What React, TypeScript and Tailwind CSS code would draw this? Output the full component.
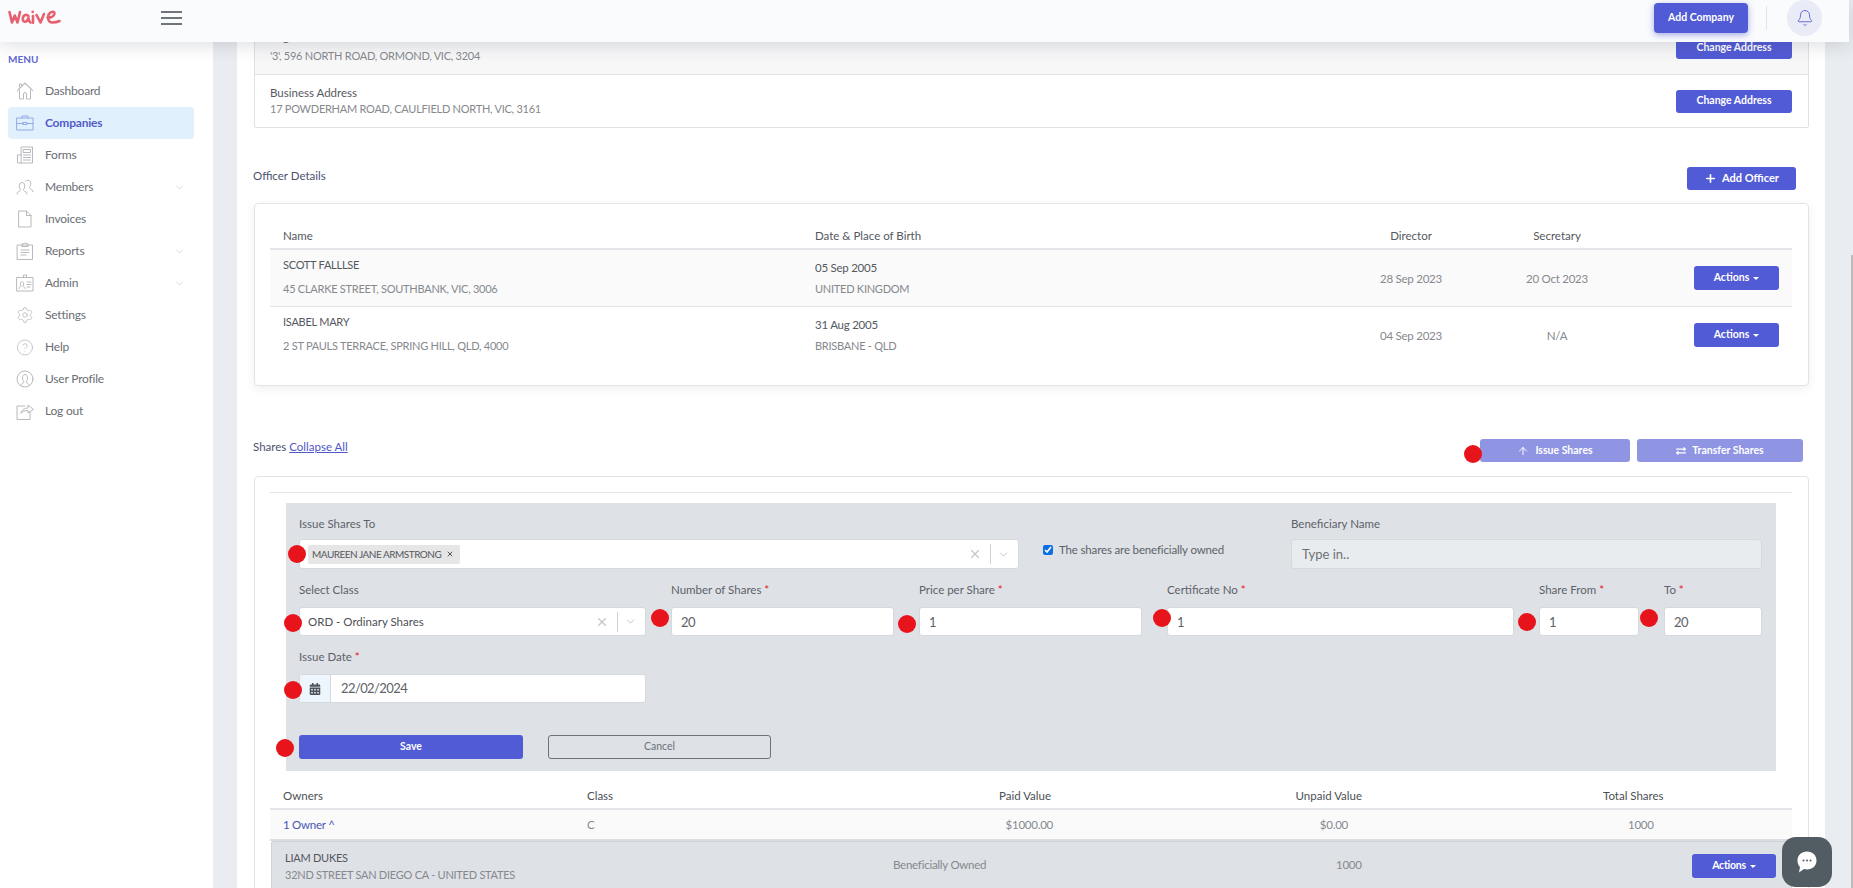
import React from 'react';
import { Plus, ArrowUp, Bell, Settings, CircleHelp, ChevronDown, X } from 'lucide-react';
import { FaCalendarAlt, FaExchangeAlt } from 'react-icons/fa';

const s = { fill: 'none', stroke: 'currentColor', strokeWidth: 0.9, strokeLinecap: 'round', strokeLinejoin: 'round' } as const;

const Ic = ({ children }: { children: React.ReactNode }) => (
  <svg width="18" height="18" viewBox="0 0 18 18" {...s}>{children}</svg>
);

const icons: Record<string, React.ReactNode> = {
  Dashboard: <Ic><path d="M1 9 9 1.5 17 9M2 7.5 9 .8l7 6.7M3.500 8v9h4v-5a1.500 1.500 0 0 1 3 0v5h4V8M3.500 5V2h2v1.500" /></Ic>,
  Companies: <Ic><rect x="1" y="4" width="16" height="12" /><path d="M6 4V2h6v2M1 9.500h6M11 9.500h6" /><rect x="7" y="8.500" width="4" height="2" /></Ic>,
  Forms: <Ic><rect x="5.500" y="1" width="11" height="16" /><path d="M5.500 9H1.500v8h4M7.500 3.500h7v3h-7zM7.500 9h7M7.500 11.500h7M7.500 14h7" /></Ic>,
  Members: <Ic><path d="M.8 16c0-2.500 3-2.500 3.700-3.800.4-.8-.9-1.500-1.100-3C3.100 7 3.500 4.500 6 4.500s3 2.500 2.600 4.700c-.2 1.500-1.500 2.200-1.100 3 .7 1.300 3.700 1.300 3.700 3.800M9.500 3.200C10 2.500 11 2.200 12 2.200c2.500 0 3 2.500 2.600 4.700-.2 1.500-1.500 2.200-1.100 3 .7 1.300 3.700 1.500 3.700 3.800" /></Ic>,
  Invoices: <Ic><path d="M3 1h7.500L15 5.500V17H3zM10.500 1v4.500H15" /></Ic>,
  Reports: <Ic><rect x="1.500" y="3" width="15" height="14.500" /><path d="M6 3V1.800h2L9 .7l1 1.100h2V4.500H6zM5 8h8M5 10.500h8M5 13h5" /></Ic>,
  Admin: <Ic><rect x="1" y="3.500" width="16" height="13.500" /><path d="M7.500 3.500V1h3v2.500M2.800 14.500c0-1.500 2-1.500 2.300-2.300.2-.5-.8-1-.8-2.200 0-1.300.6-2.200 1.700-2.200S7.700 8.700 7.700 10c0 1.200-1 1.700-.8 2.200.3.800 2.300.8 2.300 2.300M11 8h4M11 10.500h4M11 13h3" /></Ic>,
  Settings: <Settings size={18} strokeWidth={1} />,
  Help: <CircleHelp size={19} strokeWidth={0.9} />,
  'User Profile': <Ic><circle cx="9" cy="9" r="8" /><path d="M4.500 15.500c.3-2 3-2 3.300-3.300.2-.8-1.300-1.500-1.300-4C6.500 6 7.500 4.500 9 4.500S11.500 6 11.500 8.200c0 2.500-1.500 3.200-1.300 4 .3 1.300 3 1.300 3.300 3.300" /></Ic>,
  'Log out': <Ic><path d="M9 4H1v13.500h13V10M5 11c.5-3 3-5 7-5V3l5.500 4.500L12 11V8.500c-3 0-5.500.5-7 2.500z" /></Ic>,
};

const menu: [string, boolean?][] = [
  ['Dashboard'], ['Companies'], ['Forms'], ['Members', true], ['Invoices'], ['Reports', true], ['Admin', true], ['Settings'], ['Help'], ['User Profile'], ['Log out'],
];

const Dot = ({ className }: { className: string }) => (
  <span className={`absolute w-[18px] h-[18px] rounded-full bg-[#e8141c] ${className}`} />
);

const Btn = ({ children, className = '' }: { children: React.ReactNode; className?: string }) => (
  <button className={`flex items-center justify-center rounded-[3px] bg-[#525bd6] text-white text-[10.500px] font-bold ${className}`}>{children}</button>
);

const Actions = ({ className = '' }: { className?: string }) => (
  <Btn className={`h-[24px] gap-[4px] ${className}`}>
    Actions
    <span className="w-0 h-0 border-x-[3px] border-x-transparent border-t-[3px] border-t-white" />
  </Btn>
);

const Label = ({ children, req }: { children: React.ReactNode; req?: boolean }) => (
  <div className="h-[16px] leading-[16px] text-[11.500px] text-[#5d6168]">
    {children}
    {req && <span className="text-[#e8141c]"> *</span>}
  </div>
);

const Field = ({ label, value, dot }: { label: string; value: string; dot: string }) => (
  <div>
    <Label req>{label}</Label>
    <div className="relative mt-[9px]">
      <Dot className={dot} />
      <input readOnly value={value} className="block w-full h-[29px] rounded-[3px] bg-white border border-[#d5d8dc] px-[9px] text-[13px] tracking-[-0.5px] text-[#5d6168] outline-none" />
    </div>
  </div>
);

const Officer = ({ name, addr, date, place, dir, sec, shaded }: { name: string; addr: string; date: string; place: string; dir: string; sec: string; shaded?: boolean }) => (
  <div className={`grid grid-cols-[545px_523px_146px_146px_162px] h-[57px] border-b border-[#e3e5e8] last:border-b-transparent ${shaded ? 'bg-[#fafafa]' : ''}`}>
    <div className="pl-[13px] pt-[7px]">
      <div className="leading-[16px] text-[11px] tracking-[-0.25px] text-[#55585e]">{name}</div>
      <div className="mt-[8px] leading-[16px] text-[11px] tracking-[-0.25px] text-[#85898e]">{addr}</div>
    </div>
    <div className="pt-[10px]">
      <div className="leading-[16px] text-[11.500px] tracking-[-0.25px] text-[#55585e]">{date}</div>
      <div className="mt-[5px] leading-[16px] text-[11px] tracking-[-0.25px] text-[#85898e]">{place}</div>
    </div>
    <div className="flex items-center justify-center text-[11.500px] tracking-[-0.25px] text-[#85898e] pt-[2px]">{dir}</div>
    <div className="flex items-center justify-center text-[11.500px] tracking-[-0.25px] text-[#85898e] pt-[2px]">{sec}</div>
    <div className="flex justify-end pr-[13px] pt-[16px]"><Actions className="w-[85px]" /></div>
  </div>
);

export default function App() {
  return (
    <div className="relative flex flex-col h-[888px] overflow-hidden bg-[#e9ecf0] text-[11.500px] font-['Lato','Open_Sans',sans-serif]">
      <header className="relative z-10 flex items-center w-[1849px] h-[42px] shrink-0 bg-[#fafbfd] shadow-[0_3px_18px_rgba(40,45,60,0.16)]">
        <svg width="53" height="18" viewBox="0 0 53 18" className="ml-[8px] -mt-[8px]" fill="none" stroke="#e7606f" strokeWidth="2.600" strokeLinecap="round" strokeLinejoin="round" role="img" aria-label="waive logo">
          <path d="M1.500 4 4 14.500 6.800 7.500 9.500 14.500 12 4" />
          <path d="M20.500 8C18.500 5.800 14.800 7 14.800 10.800c0 4 3.800 4.300 5.700-.8.2 2.500.8 4 2 4.500" />
          <path d="M25 8V14.800M24.700 3.800v.2" />
          <path d="M28.500 7 32.500 14.500 36 6" />
          <path d="M39.500 9.500c3 .3 6.500-1 7-4 .3-2.500-3.500-2.500-5.500.5-2 3.500-.5 8.500 3 8.500 3 0 5.500-.5 7.500-1.500" />
        </svg>
        <div className="ml-[100px] -mt-[6px] w-[21px] flex flex-col gap-[4.500px]">
          <span className="block h-[1.500px] bg-[#6e7479]" />
          <span className="block h-[1.500px] bg-[#6e7479]" />
          <span className="block h-[1.500px] bg-[#6e7479]" />
        </div>
        <div className="ml-auto flex items-center pr-[27px]">
          <Btn className="w-[94px] h-[30px] rounded-[4px] -mt-[6px] shadow-[0_2px_6px_rgba(82,91,214,0.5)]">Add Company</Btn>
          <span className="ml-[18px] -mt-[6px] w-px h-[24px] bg-[#e2e4ea]" />
          <span className="ml-[20px] -mt-[6px] flex items-center justify-center w-[35px] h-[36px] rounded-full bg-[#e9ebf7] text-[#5a62d0]">
            <Bell size={18} strokeWidth={1.200} />
          </span>
        </div>
      </header>

      <div className="flex flex-1 min-h-0">
        <aside className="w-[213px] shrink-0 bg-white pt-[10px] pl-[8px] pr-[19px]">
          <div className="h-[14px] leading-[14px] text-[10px] font-bold text-[#5f67d3] mb-[9px]">MENU</div>
          {menu.map(([name, chev]) => {
            const active = name === 'Companies';
            return (
              <div key={name} className={`flex items-center h-[32px] rounded-[4px] pl-[8px] pr-[9px] ${active ? 'bg-[#e1f0fd]' : ''}`}>
                <span className={`flex justify-center w-[18px] ${active ? 'text-[#8aa5de]' : 'text-[#b0b2b6]'}`}>{icons[name]}</span>
                <span className={`ml-[11px] text-[12px] tracking-[-0.2px] ${active ? 'font-bold text-[#535cc8]' : 'text-[#6a6e73]'}`}>{name}</span>
                {chev && <ChevronDown size={11} strokeWidth={1} className="ml-auto text-[#a9acb0]" />}
              </div>
            );
          })}
        </aside>

        <main className="ml-[24px] w-[1588px] shrink-0 bg-white pl-[17px] pr-[16px] overflow-hidden">
          <section className="-mt-[22px] border border-[#dfe1e3] rounded-[2px]">
            <div className="flex items-center justify-between h-[54px] bg-[#f7f7f8] border-b border-[#dfe1e3] pl-[15px] pr-[16px]">
              <div>
                <div className="leading-[16px] text-[11.500px] text-[#55585e] -translate-y-[3px]">Registered Address</div>
                <div className="leading-[16px] text-[11px] tracking-[-0.25px] text-[#85898e]">'3', 596 NORTH ROAD, ORMOND, VIC, 3204</div>
              </div>
              <Btn className="w-[116px] h-[23px]">Change Address</Btn>
            </div>
            <div className="flex items-center justify-between h-[52px] pl-[15px] pr-[16px]">
              <div>
                <div className="leading-[16px] text-[11.500px] text-[#55585e]">Business Address</div>
                <div className="leading-[16px] text-[11px] tracking-[-0.25px] text-[#85898e]">17 POWDERHAM ROAD, CAULFIELD NORTH, VIC, 3161</div>
              </div>
              <Btn className="w-[116px] h-[23px]">Change Address</Btn>
            </div>
          </section>

          <div className="flex items-center justify-between h-[23px] mt-[39px] pr-[13px]">
            <span className="text-[11.500px] text-[#4d5170] -translate-y-[3px] -ml-px">Officer Details</span>
            <Btn className="w-[109px] h-[23px] gap-[5px] text-[11px]"><Plus size={13} strokeWidth={3} />Add Officer</Btn>
          </div>

          <section className="mt-[13px] h-[183px] border border-[#e1e3e6] rounded-[4px] shadow-[0_3px_10px_rgba(60,65,80,0.08)] pl-[15px] pr-[16px] pt-[16px]">
            <div className="grid grid-cols-[545px_523px_146px_146px_162px] h-[30px] pt-[7px] border-b-2 border-[#e3e5e8] text-[#55585e]">
              <div className="pl-[13px]">Name</div>
              <div>Date &amp; Place of Birth</div>
              <div className="text-center">Director</div>
              <div className="text-center">Secretary</div>
              <div />
            </div>
            <Officer shaded name="SCOTT FALLLSE" addr="45 CLARKE STREET, SOUTHBANK, VIC, 3006" date="05 Sep 2005" place="UNITED KINGDOM" dir="28 Sep 2023" sec="20 Oct 2023" />
            <Officer name="ISABEL MARY" addr="2 ST PAULS TERRACE, SPRING HILL, QLD, 4000" date="31 Aug 2005" place="BRISBANE - QLD" dir="04 Sep 2023" sec="N/A" />
          </section>

          <div className="flex items-center justify-between h-[23px] mt-[53px] pr-[6px]">
            <span className="text-[11.500px] text-[#4d5170] -translate-y-[4px] -ml-px">Shares <a className="underline text-[#5058c8]">Collapse All</a></span>
            <div className="flex gap-[7px]">
              <div className="relative">
                <Dot className="-left-[16px] top-[6px]" />
                <Btn className="w-[150px] h-[23px] gap-[6px] bg-[#8f95e3]!"><ArrowUp size={12} strokeWidth={2} />Issue Shares</Btn>
              </div>
              <Btn className="w-[166px] h-[23px] gap-[6px] bg-[#8f95e3]!"><FaExchangeAlt size={10} />Transfer Shares</Btn>
            </div>
          </div>

          <section className="mt-[14px] h-[420px] border border-[#e1e3e6] rounded-[4px] pl-[15px] pr-[16px]">
            <div className="h-[16px] border-b border-[#e3e5e8]" />
            <div className="mt-[10px] mx-[16px] h-[268px] bg-[#dee1e6] pt-[13px] pl-[13px] pr-[14px]">
              <div className="flex">
                <div className="w-[720px]">
                  <Label>Issue Shares To</Label>
                  <div className="relative flex items-center h-[30px] mt-[7px] bg-white border border-[#d5d8dc] rounded-[3px] pl-[8px] pr-[8px]">
                    <Dot className="-left-[12px] top-[5px]" />
                    <span className="flex items-center justify-between w-[152px] h-[19px] bg-[#e6e6e6] rounded-[2px] pl-[4px] pr-[6px] text-[10px] tracking-[-0.5px] text-[#55585e]">
                      MAUREEN JANE ARMSTRONG
                      <X size={8} strokeWidth={3} className="text-[#555]" />
                    </span>
                    <X size={14} strokeWidth={2} className="ml-auto mr-[8px] text-[#c4c6c9]" />
                    <span className="w-px h-[20px] bg-[#cfd1d4]" />
                    <ChevronDown size={13} strokeWidth={1.500} className="ml-[6px] text-[#b7b9bc]" />
                  </div>
                </div>
                <label className="ml-[24px] w-[248px] flex items-center gap-[6px] h-[30px] mt-[20px] pb-[2px] text-[11.500px] tracking-[-0.15px] text-[#5d6168]">
                  <input type="checkbox" checked readOnly className="w-[10px] h-[10px] accent-[#0b6fe3]" />
                  The shares are beneficially owned
                </label>
                <div className="w-[471px]">
                  <Label>Beneficiary Name</Label>
                  <input readOnly placeholder="Type in.." className="block w-full h-[30px] mt-[7px] rounded-[3px] bg-[#e9ecef] border border-[#d5d8dc] px-[10px] text-[13px] placeholder:text-[#6c7075] outline-none" />
                </div>
              </div>

              <div className="grid grid-cols-[347px_223px_223px_347px_100px_98px] gap-x-[25px] mt-[13px]">
                <div>
                  <Label>Select Class</Label>
                  <div className="relative flex items-center h-[29px] mt-[9px] bg-white border border-[#d5d8dc] rounded-[3px] pl-[8px] pr-[8px] text-[11.500px] text-[#4c4f55]">
                    <Dot className="-left-[16px] top-[6px]" />
                    ORD - Ordinary Shares
                    <X size={14} strokeWidth={2} className="ml-auto mr-[8px] text-[#c4c6c9]" />
                    <span className="w-px h-[20px] bg-[#cfd1d4]" />
                    <ChevronDown size={13} strokeWidth={1.500} className="ml-[6px] text-[#b7b9bc]" />
                  </div>
                </div>
                <Field label="Number of Shares" value="20" dot="-left-[20px] top-[2px]" />
                <Field label="Price per Share" value="1" dot="-left-[21px] top-[8px]" />
                <Field label="Certificate No" value="1" dot="-left-[14px] top-[2px]" />
                <Field label="Share From" value="1" dot="-left-[21px] top-[6px]" />
                <Field label="To" value="20" dot="-left-[24px] top-[2px]" />
              </div>

              <div className="mt-[13px] w-[347px]">
                <Label req>Issue Date</Label>
                <div className="relative flex h-[29px] mt-[9px] bg-white border border-[#d5d8dc] rounded-[3px]">
                  <Dot className="-left-[16px] top-[6px] z-10" />
                  <span className="flex items-center justify-center w-[31px] bg-[#eef6fd] border-r border-[#d5d8dc] text-[#4e5358] rounded-l-[3px]"><FaCalendarAlt size={12} /></span>
                  <input readOnly value="22/02/2024" className="flex-1 min-w-0 pl-[10px] text-[13px] tracking-[-0.6px] text-[#5d6168] outline-none" />
                </div>
              </div>

              <div className="flex gap-[25px] mt-[32px]">
                <div className="relative">
                  <Dot className="-left-[23px] top-[4px]" />
                  <Btn className="w-[224px] h-[24px]">Save</Btn>
                </div>
                <button className="w-[223px] h-[24px] border border-[#6d7378] rounded-[3px] text-[10.500px] text-[#6d7378]">Cancel</button>
              </div>
            </div>

            <div className="grid grid-cols-[317px_213px_253px_309px_430px] h-[39px] pt-[16px] border-b-2 border-[#e3e5e8] text-[#4c4f55]">
              <div className="pl-[13px]">Owners</div>
              <div>Class</div>
              <div className="text-right pr-[2px]">Paid Value</div>
              <div className="text-right">Unpaid Value</div>
              <div className="pl-[241px]">Total Shares</div>
            </div>
            <div className="grid grid-cols-[317px_213px_253px_309px_430px] items-center h-[31px] bg-[#fafafa] border-b-2 border-[#dcdee1] text-[#85898e] tracking-[-0.25px]">
              <div className="pl-[13px] text-[#4a55b8]">1 Owner ^</div>
              <div>C</div>
              <div className="text-right">$1000.00</div>
              <div className="text-right pr-[14px]">$0.00</div>
              <div className="pl-[266px]">1000</div>
            </div>
            <div className="grid grid-cols-[621px_443px_356px_84px] h-[60px] ml-px border border-[#cfd2d6] bg-[#dee1e6] rounded-[2px] text-[#85898e] tracking-[-0.25px]">
              <div className="pl-[13px] pt-[7px]">
                <div className="leading-[17px] text-[11px] text-[#55585e]">LIAM DUKES</div>
                <div className="leading-[17px] text-[11px]">32ND STREET SAN DIEGO CA - UNITED STATES</div>
              </div>
              <div className="pt-[14px]">Beneficially Owned</div>
              <div className="pt-[14px]">1000</div>
              <div className="pt-[12px]"><Actions className="w-[84px]" /></div>
            </div>
          </section>
        </main>
      </div>

      <span className="absolute right-0 top-[255px] bottom-0 w-[2px] bg-[#bcbcbc]" />
      <button className="absolute z-20 right-[21px] bottom-[1px] flex items-center justify-center w-[50px] h-[50px] rounded-[14px] bg-[#515c63]">
        <svg width="22" height="24" viewBox="0 0 22 24">
          <path d="M11 1.500c5.500 0 9.500 3.800 9.500 9s-4 9-9.500 9c-1 0-2-.2-3-.5L3 22.500l1-5.500C2.500 15.500 1.500 13.200 1.500 10.500c0-5.200 4-9 9.500-9z" fill="#fff" />
          <circle cx="7.500" cy="10.500" r="1" fill="#515c63" />
          <circle cx="11" cy="10.500" r="1" fill="#515c63" />
          <circle cx="14.500" cy="10.500" r="1" fill="#515c63" />
        </svg>
      </button>
    </div>
  );
}
